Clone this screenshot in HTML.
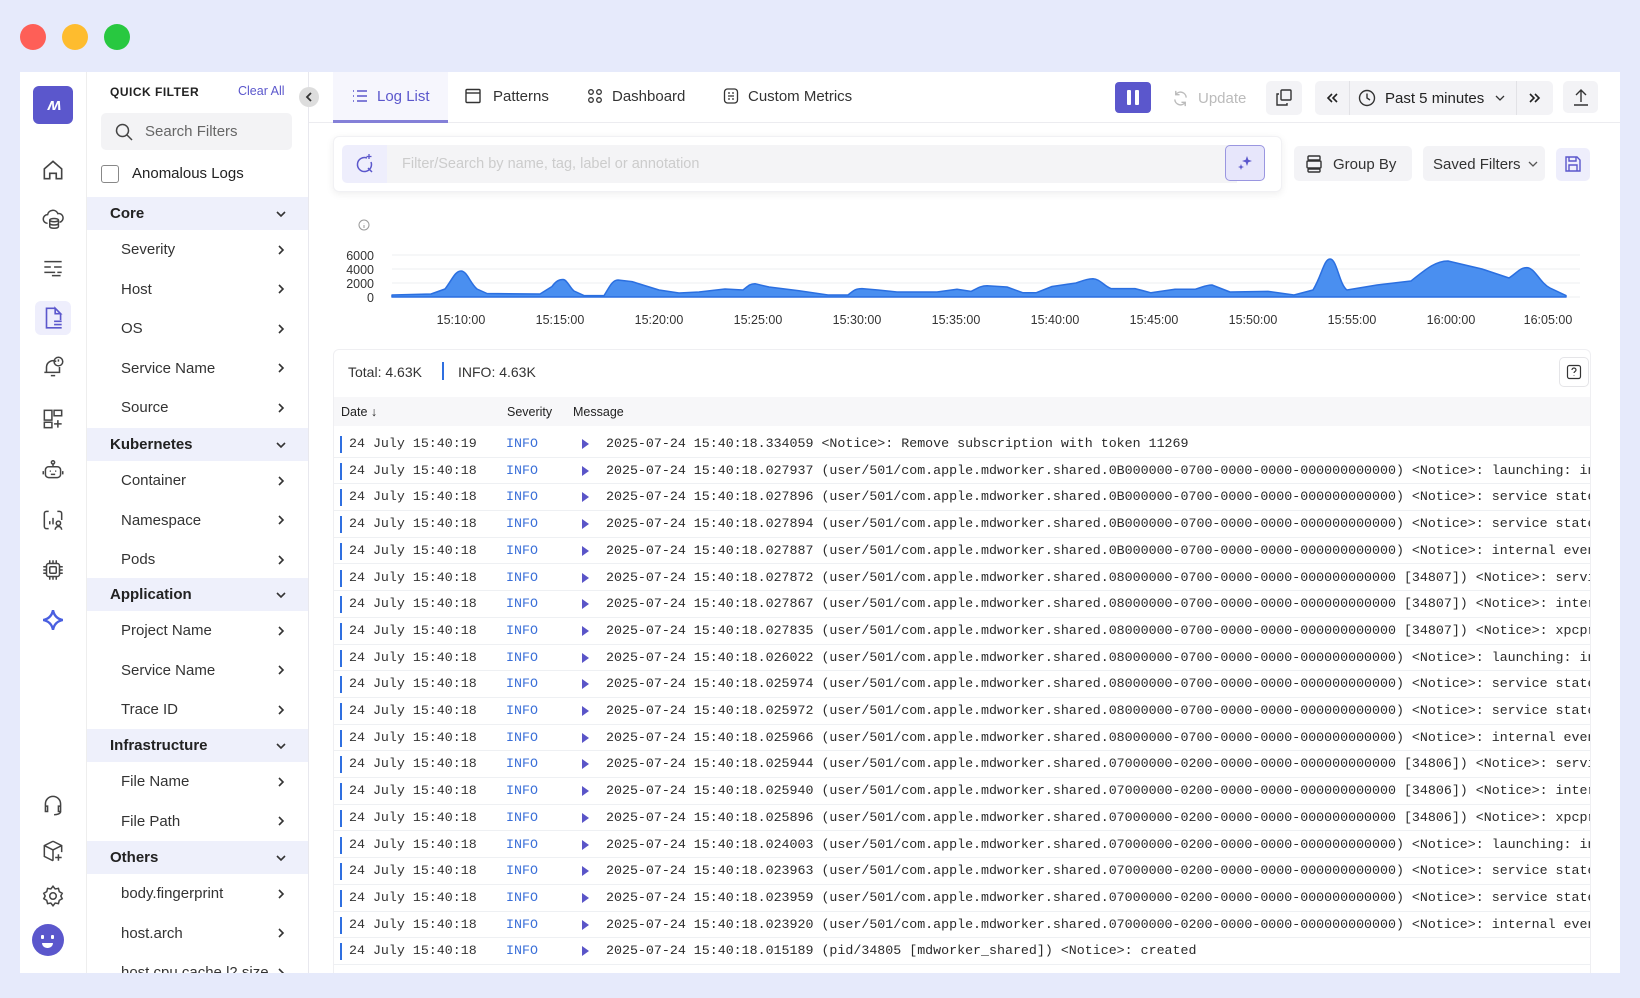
<!DOCTYPE html>
<html><head><meta charset="utf-8"><style>
*{box-sizing:border-box;margin:0;padding:0}
body{width:1640px;height:998px;background:#e6eafb;font-family:"Liberation Sans",sans-serif;position:relative;overflow:hidden;color:#222}
.a{position:absolute}
.dot{position:absolute;width:26px;height:26px;border-radius:50%;top:24px}
.win{position:absolute;left:20px;top:72px;width:1600px;height:901px;background:#fff;overflow:hidden}
.rail{position:absolute;left:0;top:0;width:67px;height:901px;background:#fff;border-right:1px solid #eee}
.ri{position:absolute;left:20px;width:26px;height:26px}
.fp{position:absolute;left:67px;top:0;width:222px;height:901px;background:#fff;border-right:1px solid #e8e8ee;overflow:hidden}
.sh{position:absolute;left:0;width:222px;height:33px;background:#eef0fb;font-weight:bold;font-size:15px;line-height:33px;padding-left:23px;color:#222}
.it{position:absolute;left:0;width:222px;height:39px;font-size:15px;line-height:39px;padding-left:34px;color:#333}
.chev{position:absolute;right:16px;top:50%;margin-top:-6px;width:12px;height:12px}
.tab{position:absolute;top:0;height:51px;line-height:50px;font-size:15px;color:#333}
.btn{position:absolute;background:#f3f3f6;border-radius:5px}
.row{position:absolute;left:0;width:1258px;height:26.7px;border-bottom:1px solid #eef0f3;font-family:"Liberation Mono",monospace;font-size:13.3px;line-height:26px;white-space:nowrap;overflow:hidden}
.row .bar{position:absolute;left:6px;top:5px;width:2px;height:17px;background:#2f6fe0}
.row .d{position:absolute;left:15px;color:#333}
.row .s{position:absolute;left:172px;color:#3a6fd8}
.row .t{position:absolute;left:248px;top:8px;width:0;height:0;border-left:7px solid #5a55c8;border-top:5px solid transparent;border-bottom:5px solid transparent}
.row .m{position:absolute;left:272px;color:#2a2a2a}
</style></head><body>
<svg width="0" height="0" style="position:absolute"><defs>
<symbol id="cr" viewBox="0 0 12 12"><path d="M4 2l4 4-4 4" fill="none" stroke="#333" stroke-width="1.6"/></symbol>
<symbol id="cd" viewBox="0 0 12 12"><path d="M2 4l4 4 4-4" fill="none" stroke="#333" stroke-width="1.6"/></symbol>
</defs></svg>
<div class="dot" style="left:20px;background:#fe5f57"></div>
<div class="dot" style="left:62px;background:#febc2e"></div>
<div class="dot" style="left:104px;background:#28c840"></div>

<div class="win">
 <div class="rail">
  <div class="a" style="left:13px;top:14px;width:40px;height:38px;border-radius:6px;background:#5b57cc;color:#fff;font-weight:bold;font-style:italic;font-size:17px;line-height:38px;text-align:center;letter-spacing:-3px">ʍ</div>
  <svg class="ri" style="top:85px" viewBox="0 0 24 24" fill="none" stroke="#444" stroke-width="1.5"><path d="M4 11l8-7 8 7v9h-5v-5h-6v5H4z"/></svg>
  <svg class="ri" style="top:134px" viewBox="0 0 24 24" fill="none" stroke="#444" stroke-width="1.4"><path d="M7 16a4 4 0 010-8 5 5 0 019.5-1A4 4 0 0118 15"/><ellipse cx="13" cy="13" rx="4" ry="1.5"/><path d="M9 13v6c0 1 2 1.5 4 1.5s4-.5 4-1.5v-6M9 16c0 1 2 1.5 4 1.5s4-.5 4-1.5"/></svg>
  <svg class="ri" style="top:182px" viewBox="0 0 24 24" fill="none" stroke="#444" stroke-width="1.4"><path d="M4 7h16M4 12h6M13 12h7M4 17h10M16 17h4M11 20h8"/></svg>
  <div class="a" style="left:15px;top:229px;width:36px;height:34px;border-radius:6px;background:#eeeefc"></div>
  <svg class="ri" style="top:233px" viewBox="0 0 24 24" fill="none" stroke="#5b57cc" stroke-width="1.5"><path d="M14 3H6v18h9M14 3l5 5h-5zM19 8v6M13 15h7M13 18h7M13 21h7"/></svg>
  <svg class="ri" style="top:282px" viewBox="0 0 24 24" fill="none" stroke="#444" stroke-width="1.4"><path d="M6 17V12a6 6 0 019-5M18 12v5H4M10 20h4"/><circle cx="17" cy="7" r="4"/><path d="M17 5v2M17 9v.1"/></svg>
  <svg class="ri" style="top:334px" viewBox="0 0 24 24" fill="none" stroke="#444" stroke-width="1.4"><rect x="4" y="4" width="7" height="9"/><rect x="4" y="15" width="7" height="5"/><rect x="13" y="4" width="7" height="5"/><path d="M16.5 13v7M13 16.5h7"/></svg>
  <svg class="ri" style="top:385px" viewBox="0 0 24 24" fill="none" stroke="#444" stroke-width="1.4"><rect x="5" y="9" width="14" height="10" rx="3"/><circle cx="12" cy="5" r="1.5"/><path d="M12 6.5V9M3 13v3M21 13v3M9 13h1M14 13h1M10 16h4"/></svg>
  <svg class="ri" style="top:435px" viewBox="0 0 24 24" fill="none" stroke="#444" stroke-width="1.4"><path d="M8 4H6a2 2 0 00-2 2v12a2 2 0 002 2h2M16 4h2a2 2 0 012 2v6"/><path d="M9 16v-3M12 16v-6"/><circle cx="17" cy="15" r="2"/><path d="M14 21a3 3 0 016 0"/></svg>
  <svg class="ri" style="top:485px" viewBox="0 0 24 24" fill="none" stroke="#444" stroke-width="1.4"><rect x="6" y="6" width="12" height="12" rx="2"/><rect x="9" y="9" width="6" height="6" rx="1"/><path d="M9 3v3M12 3v3M15 3v3M9 18v3M12 18v3M15 18v3M3 9h3M3 12h3M3 15h3M18 9h3M18 12h3M18 15h3"/></svg>
  <svg class="ri" style="top:535px" viewBox="0 0 24 24"><path d="M12 3c1 5 4 8 9 9-5 1-8 4-9 9-1-5-4-8-9-9 5-1 8-4 9-9z" fill="none" stroke="#4a5fe0" stroke-width="2.2"/></svg>
  <svg class="ri" style="top:720px" viewBox="0 0 24 24" fill="none" stroke="#444" stroke-width="1.4"><path d="M5 14v-3a7 7 0 0114 0v3M5 13h2v5H5zM17 13h2v5h-2zM19 18c0 2-3 3-6 3"/></svg>
  <svg class="ri" style="top:766px" viewBox="0 0 24 24" fill="none" stroke="#444" stroke-width="1.4"><path d="M12 3l8 4v6M12 3L4 7v10l8 4M4 7l8 4 8-4M12 11v10M17 15v6M14 18h6"/></svg>
  <svg class="ri" style="top:811px" viewBox="0 0 24 24" fill="none" stroke="#444" stroke-width="1.4"><circle cx="12" cy="12" r="3"/><path d="M12 3l2 2.5 3-.5.8 3 2.7 1.5-1.3 2.5 1.3 2.5-2.7 1.5-.8 3-3-.5-2 2.5-2-2.5-3 .5-.8-3L3.5 14.5 4.8 12 3.5 9.5 6.2 8 7 5l3 .5z"/></svg>
  <div class="a" style="left:12px;top:852px;width:32px;height:32px;border-radius:50%;background:#5b57cc"></div>
  <div class="a" style="left:21px;top:863px;width:3px;height:4px;background:#fff;border-radius:1px"></div>
  <div class="a" style="left:31px;top:863px;width:3px;height:4px;background:#fff;border-radius:1px"></div>
  <div class="a" style="left:22px;top:871px;width:11px;height:5px;background:#fff;border-radius:0 0 6px 6px"></div>
 </div>

 <div class="fp">
  <div class="a" style="left:23px;top:13px;font-size:12px;font-weight:bold;letter-spacing:.5px">QUICK FILTER</div>
  <div class="a" style="left:151px;top:12px;font-size:12.5px;color:#5b57cc">Clear All</div>
  <div class="a" style="left:14px;top:41px;width:191px;height:37px;background:#f3f3f5;border-radius:5px"></div>
  <svg class="a" style="left:27px;top:50px" width="20" height="20" viewBox="0 0 20 20" fill="none" stroke="#444" stroke-width="1.5"><circle cx="8.5" cy="8.5" r="6"/><path d="M13 13l5 5"/></svg>
  <div class="a" style="left:58px;top:51px;font-size:15px;color:#666">Search Filters</div>
  <div class="a" style="left:14px;top:93px;width:18px;height:18px;border:1.5px solid #888;border-radius:3px"></div>
  <div class="a" style="left:45px;top:93px;font-size:15px;color:#222">Anomalous Logs</div>

  <div class="sh" style="top:125px">Core<svg class="chev" style="right:22px"><use href="#cd"/></svg></div>
  <div class="it" style="top:158px">Severity<svg class="chev" style="right:22px"><use href="#cr"/></svg></div>
  <div class="it" style="top:197.5px">Host<svg class="chev" style="right:22px"><use href="#cr"/></svg></div>
  <div class="it" style="top:237px">OS<svg class="chev" style="right:22px"><use href="#cr"/></svg></div>
  <div class="it" style="top:276.5px">Service Name<svg class="chev" style="right:22px"><use href="#cr"/></svg></div>
  <div class="it" style="top:316px">Source<svg class="chev" style="right:22px"><use href="#cr"/></svg></div>
  <div class="sh" style="top:356px">Kubernetes<svg class="chev" style="right:22px"><use href="#cd"/></svg></div>
  <div class="it" style="top:389px">Container<svg class="chev" style="right:22px"><use href="#cr"/></svg></div>
  <div class="it" style="top:428.5px">Namespace<svg class="chev" style="right:22px"><use href="#cr"/></svg></div>
  <div class="it" style="top:468px">Pods<svg class="chev" style="right:22px"><use href="#cr"/></svg></div>
  <div class="sh" style="top:506px">Application<svg class="chev" style="right:22px"><use href="#cd"/></svg></div>
  <div class="it" style="top:539px">Project Name<svg class="chev" style="right:22px"><use href="#cr"/></svg></div>
  <div class="it" style="top:578.5px">Service Name<svg class="chev" style="right:22px"><use href="#cr"/></svg></div>
  <div class="it" style="top:618px">Trace ID<svg class="chev" style="right:22px"><use href="#cr"/></svg></div>
  <div class="sh" style="top:657px">Infrastructure<svg class="chev" style="right:22px"><use href="#cd"/></svg></div>
  <div class="it" style="top:690px">File Name<svg class="chev" style="right:22px"><use href="#cr"/></svg></div>
  <div class="it" style="top:729.5px">File Path<svg class="chev" style="right:22px"><use href="#cr"/></svg></div>
  <div class="sh" style="top:769px">Others<svg class="chev" style="right:22px"><use href="#cd"/></svg></div>
  <div class="it" style="top:802px">body.fingerprint<svg class="chev" style="right:22px"><use href="#cr"/></svg></div>
  <div class="it" style="top:841.5px">host.arch<svg class="chev" style="right:22px"><use href="#cr"/></svg></div>
  <div class="it" style="top:881px">host.cpu.cache.l2.size<svg class="chev" style="right:22px"><use href="#cr"/></svg></div>
 </div>
 <div class="a" style="left:279px;top:15px;width:20px;height:20px;border-radius:50%;background:#ddd"></div>
 <svg class="a" style="left:283px;top:19px" width="12" height="12"><path d="M8 2L4 6l4 4" fill="none" stroke="#333" stroke-width="1.8"/></svg>

 <!-- tabs -->
 <div class="a" style="left:289px;top:50px;width:1311px;height:1px;background:#ececf0"></div>
 <div class="a" style="left:313px;top:0;width:115px;height:51px;background:#f6f6fd;border-bottom:3px solid #8480d8"></div>
 <svg class="a" style="left:331px;top:15px" width="18" height="18" viewBox="0 0 18 18" fill="none" stroke="#5b57cc" stroke-width="1.4"><path d="M2 4h1M2 9h1M2 14h1M6 4h10M6 9h10M6 14h10"/></svg>
 <div class="tab" style="left:357px;color:#5b57cc">Log List</div>
 <svg class="a" style="left:444px;top:15px" width="18" height="18" viewBox="0 0 18 18" fill="none" stroke="#333" stroke-width="1.4"><rect x="2" y="2.5" width="14" height="13" rx="1"/><path d="M2 6h14"/></svg>
 <div class="tab" style="left:473px">Patterns</div>
 <svg class="a" style="left:566px;top:15px" width="18" height="18" viewBox="0 0 18 18" fill="none" stroke="#333" stroke-width="1.3"><circle cx="5" cy="5" r="2.3"/><circle cx="13" cy="5" r="2.3"/><circle cx="5" cy="13" r="2.3"/><circle cx="13" cy="13" r="2.3"/></svg>
 <div class="tab" style="left:592px">Dashboard</div>
 <svg class="a" style="left:702px;top:15px" width="18" height="18" viewBox="0 0 18 18" fill="none" stroke="#333" stroke-width="1.3"><rect x="2.5" y="2" width="13" height="14" rx="3"/><path d="M6 6h2M10 6h2M6 9h6M6 12h2M10 12h2"/></svg>
 <div class="tab" style="left:728px">Custom Metrics</div>

 <div class="a" style="left:1095px;top:10px;width:36px;height:31px;border-radius:4px;background:#5b57cc"></div>
 <div class="a" style="left:1107px;top:18px;width:4px;height:15px;background:#fff;border-radius:1px"></div>
 <div class="a" style="left:1115px;top:18px;width:4px;height:15px;background:#fff;border-radius:1px"></div>
 <svg class="a" style="left:1151px;top:17px" width="19" height="19" viewBox="0 0 20 20" fill="none" stroke="#bbb" stroke-width="1.5"><path d="M16 9a6 6 0 00-11-3M4 11a6 6 0 0011 3M5 2v4h4M15 18v-4h-4"/></svg>
 <div class="a" style="left:1178px;top:18px;font-size:15px;color:#bbb">Update</div>
 <div class="btn" style="left:1246px;top:9px;width:36px;height:34px"></div>
 <svg class="a" style="left:1254px;top:16px" width="20" height="20" viewBox="0 0 20 20" fill="none" stroke="#333" stroke-width="1.4"><rect x="7" y="2" width="10" height="10" rx="1"/><path d="M5 6H3v11h10v-2"/></svg>
 <div class="btn" style="left:1295px;top:9px;width:238px;height:34px"></div>
 <div class="a" style="left:1329px;top:9px;width:1px;height:34px;background:#e2e2e6"></div>
 <div class="a" style="left:1496px;top:9px;width:1px;height:34px;background:#e2e2e6"></div>
 <svg class="a" style="left:1305px;top:19px" width="14" height="14"><path d="M7 3L3 7l4 4M12 3L8 7l4 4" fill="none" stroke="#222" stroke-width="1.6"/></svg>
 <svg class="a" style="left:1338px;top:17px" width="18" height="18" viewBox="0 0 18 18" fill="none" stroke="#333" stroke-width="1.4"><circle cx="9" cy="9" r="7.5"/><path d="M9 4.5V9l3 2"/></svg>
 <div class="a" style="left:1365px;top:18px;font-size:15px;color:#222">Past 5 minutes</div>
 <svg class="a" style="left:1495px;top:21px;margin-left:-20px" width="10" height="10"><path d="M1 3l4 4 4-4" fill="none" stroke="#333" stroke-width="1.3"/></svg>
 <svg class="a" style="left:1508px;top:19px" width="14" height="14"><path d="M2 3l4 4-4 4M7 3l4 4-4 4" fill="none" stroke="#222" stroke-width="1.6"/></svg>
 <div class="btn" style="left:1543px;top:9px;width:35px;height:32px"></div>
 <svg class="a" style="left:1551px;top:15px" width="20" height="20" viewBox="0 0 20 20" fill="none" stroke="#333" stroke-width="1.4"><path d="M10 15V3M5 8l5-5 5 5M3 18h14"/></svg>

 <!-- search card -->
 <div class="a" style="left:313px;top:64px;width:949px;height:56px;border-radius:6px;background:#fff;box-shadow:0 2px 8px rgba(0,0,0,.07);border:1px solid #f1f1f4"></div>
 <div class="a" style="left:322px;top:73px;width:45px;height:38px;background:#eeeefc;border-radius:5px 0 0 5px"></div>
 <svg class="a" style="left:333px;top:81px" width="22" height="22" viewBox="0 0 22 22" fill="none" stroke="#5b57cc" stroke-width="1.5"><path d="M14 5a7 7 0 104 4M15 15l4 4"/><path d="M16 1v5M13.5 3.5h5" stroke-width="1.3"/></svg>
 <div class="a" style="left:367px;top:73px;width:850px;height:38px;background:#f4f4f6"></div>
 <div class="a" style="left:382px;top:84px;font-size:14.5px;color:#ccc">Filter/Search by name, tag, label or annotation</div>
 <div class="a" style="left:1205px;top:73px;width:40px;height:36px;border-radius:5px;background:#e7e6fb;border:1px solid #9a96e0"></div>
 <svg class="a" style="left:1214px;top:80px" width="22" height="22" viewBox="0 0 22 22" fill="#5b57cc"><path d="M13 4l1.3 3.7L18 9l-3.7 1.3L13 14l-1.3-3.7L8 9l3.7-1.3zM7 12l.8 2.2L10 15l-2.2.8L7 18l-.8-2.2L4 15l2.2-.8z"/></svg>
 <div class="btn" style="left:1274px;top:74px;width:118px;height:35px"></div>
 <svg class="a" style="left:1284px;top:82px" width="20" height="20" viewBox="0 0 20 20" fill="none" stroke="#333" stroke-width="1.4"><rect x="4" y="2" width="12" height="4" rx="1"/><rect x="3" y="7" width="14" height="7" rx="1"/><rect x="4" y="15" width="12" height="3" rx="1"/></svg>
 <div class="a" style="left:1313px;top:84px;font-size:15px;color:#333">Group By</div>
 <div class="btn" style="left:1403px;top:74px;width:122px;height:35px"></div>
 <div class="a" style="left:1413px;top:84px;font-size:15px;color:#333">Saved Filters</div>
 <svg class="a" style="left:1508px;top:87px" width="10" height="10"><path d="M1 3l4 4 4-4" fill="none" stroke="#555" stroke-width="1.3"/></svg>
 <div class="a" style="left:1536px;top:76px;width:34px;height:33px;border-radius:5px;background:#eeeefc"></div>
 <svg class="a" style="left:1543px;top:82px" width="20" height="20" viewBox="0 0 20 20" fill="none" stroke="#5b57cc" stroke-width="1.4"><path d="M3 3h11l3 3v11H3z"/><path d="M6 3v4h7V3M6 17v-6h8v6"/></svg>

 <!-- chart -->
 <svg class="a" style="left:0;top:0" width="1600" height="260" viewBox="20 72 1600 260">
  <circle cx="364" cy="225" r="5" fill="none" stroke="#999" stroke-width="1"/>
  <path d="M364 223v.3M364 225v3" stroke="#999"/>
  <g stroke="#eceff2" stroke-width="1"><path d="M392 255H1580M392 269H1580M392 283H1580M392 297H1580"/></g>
  <g font-family="Liberation Sans" font-size="12.5" fill="#333" text-anchor="end">
   <text x="374" y="260">6000</text><text x="374" y="274">4000</text><text x="374" y="288">2000</text><text x="374" y="302">0</text>
  </g>
  <path fill="#4a8ff0" stroke="#2b6fe0" stroke-width="1.5" stroke-linejoin="round" d="M392 295 L431 294 L445 289 C452 280 455 271 461 271 C467 271 470 283 477 289 L487 293.5 L540 294 L552 286.5 C556 281 559 279.5 563 279.5 C567 279.5 570 288 574 291 L584 295.6 L604 295.6 C609 288 612 280 618 280 L632 281.6 L659 290 L679 293 L699 292 L725 289 L743 290 C748 286 750 283.7 755 283.7 L769 287 L799 290.7 L828 295 L848 295 C854 290 856 288.6 862 288.6 L878 290 L897 292 L937 292 L957 289.3 L971 291.4 C978 288 981 285.8 987 285.8 L1007 287 L1023 292.8 L1036 292.8 L1052 286.5 L1076 283 C1085 280 1088 278.8 1093 278.8 C1100 279 1104 286 1111 288.6 L1135 288.6 L1151 292.8 L1175 289.3 L1195 289.3 C1203 287 1206 285 1212 285 L1230 292 L1268 291.4 L1294 295 L1313 290 C1322 275 1324 259 1330 259 C1337 259 1339 284 1347 290 L1377 285 L1411 281 C1425 270 1435 261 1448 261 L1482 269 L1509 278 C1518 272 1520 267.6 1527 267.6 C1535 268 1540 283 1550 288 L1566 295.6 L1566 297 L392 297 Z"/>
  <g font-family="Liberation Sans" font-size="12.5" fill="#333" text-anchor="middle">
   <text x="461" y="324">15:10:00</text><text x="560" y="324">15:15:00</text><text x="659" y="324">15:20:00</text><text x="758" y="324">15:25:00</text><text x="857" y="324">15:30:00</text><text x="956" y="324">15:35:00</text><text x="1055" y="324">15:40:00</text><text x="1154" y="324">15:45:00</text><text x="1253" y="324">15:50:00</text><text x="1352" y="324">15:55:00</text><text x="1451" y="324">16:00:00</text><text x="1548" y="324">16:05:00</text>
  </g>
 </svg>

 <!-- log card -->
 <div class="a" style="left:313px;top:277px;width:1258px;height:640px;border:1px solid #efeff2;border-radius:6px;background:#fff;overflow:hidden">
  <div class="a" style="left:14px;top:14px;font-size:14px;color:#333">Total: 4.63K</div>
  <div class="a" style="left:108px;top:12px;width:2px;height:18px;background:#2f6fe0"></div>
  <div class="a" style="left:124px;top:14px;font-size:14px;color:#333">INFO: 4.63K</div>
  <div class="a" style="left:1225px;top:7px;width:30px;height:30px;border:1px solid #e5e5e8;border-radius:5px"></div>
  <svg class="a" style="left:1232px;top:14px" width="16" height="16" viewBox="0 0 16 16" fill="none" stroke="#333" stroke-width="1.2"><rect x="1.5" y="1.5" width="13" height="13" rx="2"/><path d="M6 6a2 2 0 114 0c0 1.5-2 1.5-2 3M8 11v.5"/></svg>
  <div class="a" style="left:0;top:47px;width:1258px;height:29px;background:#f7f7f9"></div>
  <div class="a" style="left:7px;top:55px;font-size:12.5px;color:#222">Date ↓</div>
  <div class="a" style="left:173px;top:55px;font-size:12.5px;color:#222">Severity</div>
  <div class="a" style="left:239px;top:55px;font-size:12.5px;color:#222">Message</div>
  <div id="rows" class="a" style="left:0;top:81px;width:1258px;height:560px">
<div class="row" style="top:0px"><i class="bar"></i><span class="d">24 July 15:40:19</span><span class="s">INFO</span><span class="t"></span><span class="m">2025-07-24 15:40:18.334059 &lt;Notice&gt;: Remove subscription with token 11269</span></div>
<div class="row" style="top:26.7px"><i class="bar"></i><span class="d">24 July 15:40:18</span><span class="s">INFO</span><span class="t"></span><span class="m">2025-07-24 15:40:18.027937 (user/501/com.apple.mdworker.shared.0B000000-0700-0000-0000-000000000000) &lt;Notice&gt;: launching: inferred</span></div>
<div class="row" style="top:53.4px"><i class="bar"></i><span class="d">24 July 15:40:18</span><span class="s">INFO</span><span class="t"></span><span class="m">2025-07-24 15:40:18.027896 (user/501/com.apple.mdworker.shared.0B000000-0700-0000-0000-000000000000) &lt;Notice&gt;: service state</span></div>
<div class="row" style="top:80.1px"><i class="bar"></i><span class="d">24 July 15:40:18</span><span class="s">INFO</span><span class="t"></span><span class="m">2025-07-24 15:40:18.027894 (user/501/com.apple.mdworker.shared.0B000000-0700-0000-0000-000000000000) &lt;Notice&gt;: service state</span></div>
<div class="row" style="top:106.8px"><i class="bar"></i><span class="d">24 July 15:40:18</span><span class="s">INFO</span><span class="t"></span><span class="m">2025-07-24 15:40:18.027887 (user/501/com.apple.mdworker.shared.0B000000-0700-0000-0000-000000000000) &lt;Notice&gt;: internal event</span></div>
<div class="row" style="top:133.5px"><i class="bar"></i><span class="d">24 July 15:40:18</span><span class="s">INFO</span><span class="t"></span><span class="m">2025-07-24 15:40:18.027872 (user/501/com.apple.mdworker.shared.08000000-0700-0000-0000-000000000000 [34807]) &lt;Notice&gt;: service</span></div>
<div class="row" style="top:160.2px"><i class="bar"></i><span class="d">24 July 15:40:18</span><span class="s">INFO</span><span class="t"></span><span class="m">2025-07-24 15:40:18.027867 (user/501/com.apple.mdworker.shared.08000000-0700-0000-0000-000000000000 [34807]) &lt;Notice&gt;: internal</span></div>
<div class="row" style="top:186.9px"><i class="bar"></i><span class="d">24 July 15:40:18</span><span class="s">INFO</span><span class="t"></span><span class="m">2025-07-24 15:40:18.027835 (user/501/com.apple.mdworker.shared.08000000-0700-0000-0000-000000000000 [34807]) &lt;Notice&gt;: xpcproxy</span></div>
<div class="row" style="top:213.6px"><i class="bar"></i><span class="d">24 July 15:40:18</span><span class="s">INFO</span><span class="t"></span><span class="m">2025-07-24 15:40:18.026022 (user/501/com.apple.mdworker.shared.08000000-0700-0000-0000-000000000000) &lt;Notice&gt;: launching: inferred</span></div>
<div class="row" style="top:240.3px"><i class="bar"></i><span class="d">24 July 15:40:18</span><span class="s">INFO</span><span class="t"></span><span class="m">2025-07-24 15:40:18.025974 (user/501/com.apple.mdworker.shared.08000000-0700-0000-0000-000000000000) &lt;Notice&gt;: service state</span></div>
<div class="row" style="top:267px"><i class="bar"></i><span class="d">24 July 15:40:18</span><span class="s">INFO</span><span class="t"></span><span class="m">2025-07-24 15:40:18.025972 (user/501/com.apple.mdworker.shared.08000000-0700-0000-0000-000000000000) &lt;Notice&gt;: service state</span></div>
<div class="row" style="top:293.7px"><i class="bar"></i><span class="d">24 July 15:40:18</span><span class="s">INFO</span><span class="t"></span><span class="m">2025-07-24 15:40:18.025966 (user/501/com.apple.mdworker.shared.08000000-0700-0000-0000-000000000000) &lt;Notice&gt;: internal event</span></div>
<div class="row" style="top:320.4px"><i class="bar"></i><span class="d">24 July 15:40:18</span><span class="s">INFO</span><span class="t"></span><span class="m">2025-07-24 15:40:18.025944 (user/501/com.apple.mdworker.shared.07000000-0200-0000-0000-000000000000 [34806]) &lt;Notice&gt;: service</span></div>
<div class="row" style="top:347.1px"><i class="bar"></i><span class="d">24 July 15:40:18</span><span class="s">INFO</span><span class="t"></span><span class="m">2025-07-24 15:40:18.025940 (user/501/com.apple.mdworker.shared.07000000-0200-0000-0000-000000000000 [34806]) &lt;Notice&gt;: internal</span></div>
<div class="row" style="top:373.8px"><i class="bar"></i><span class="d">24 July 15:40:18</span><span class="s">INFO</span><span class="t"></span><span class="m">2025-07-24 15:40:18.025896 (user/501/com.apple.mdworker.shared.07000000-0200-0000-0000-000000000000 [34806]) &lt;Notice&gt;: xpcproxy</span></div>
<div class="row" style="top:400.5px"><i class="bar"></i><span class="d">24 July 15:40:18</span><span class="s">INFO</span><span class="t"></span><span class="m">2025-07-24 15:40:18.024003 (user/501/com.apple.mdworker.shared.07000000-0200-0000-0000-000000000000) &lt;Notice&gt;: launching: inferred</span></div>
<div class="row" style="top:427.2px"><i class="bar"></i><span class="d">24 July 15:40:18</span><span class="s">INFO</span><span class="t"></span><span class="m">2025-07-24 15:40:18.023963 (user/501/com.apple.mdworker.shared.07000000-0200-0000-0000-000000000000) &lt;Notice&gt;: service state</span></div>
<div class="row" style="top:453.9px"><i class="bar"></i><span class="d">24 July 15:40:18</span><span class="s">INFO</span><span class="t"></span><span class="m">2025-07-24 15:40:18.023959 (user/501/com.apple.mdworker.shared.07000000-0200-0000-0000-000000000000) &lt;Notice&gt;: service state</span></div>
<div class="row" style="top:480.6px"><i class="bar"></i><span class="d">24 July 15:40:18</span><span class="s">INFO</span><span class="t"></span><span class="m">2025-07-24 15:40:18.023920 (user/501/com.apple.mdworker.shared.07000000-0200-0000-0000-000000000000) &lt;Notice&gt;: internal event</span></div>
<div class="row" style="top:507.3px"><i class="bar"></i><span class="d">24 July 15:40:18</span><span class="s">INFO</span><span class="t"></span><span class="m">2025-07-24 15:40:18.015189 (pid/34805 [mdworker_shared]) &lt;Notice&gt;: created</span></div>
  </div>
 </div>
</div>
</body></html>
